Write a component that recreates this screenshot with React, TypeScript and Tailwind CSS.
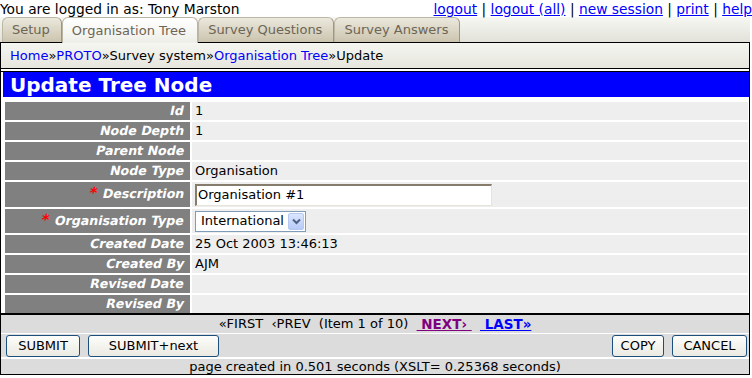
import React from "react";

type Row = {
  label: string;
  value?: string;
  required?: boolean;
  kind?: "input" | "select";
  h: string;
};

const rows: Row[] = [
  { label: "Id", value: "1", h: "h-[18px]" },
  { label: "Node Depth", value: "1", h: "h-[18px]" },
  { label: "Parent Node", value: "", h: "h-[18px]" },
  { label: "Node Type", value: "Organisation", h: "h-[18px]" },
  { label: "Description", required: true, kind: "input", h: "h-[25px]" },
  { label: "Organisation Type", required: true, kind: "select", h: "h-[24px]" },
  { label: "Created Date", value: "25 Oct 2003 13:46:13", h: "h-[18px]" },
  { label: "Created By", value: "AJM", h: "h-[18px]" },
  { label: "Revised Date", value: "", h: "h-[18px]" },
  { label: "Revised By", value: "", h: "h-[18px]" },
];

function Tab({ label, active }: { label: string; active?: boolean }) {
  if (active) {
    return (
      <div className="relative z-10 -mb-px h-[26px] flex items-center pl-[9px] pr-[11px] border-l border-r border-t border-[#b9b3a2] rounded-t-[6px] bg-gradient-to-b from-[#ffffff] to-[#eeeee8] text-[#6d6555]">
        {label}
      </div>
    );
  }
  return (
    <div className="h-[25px] flex items-center pl-[9px] pr-[11px] border-l border-t border-[#bcb6a4] border-r border-r-[#9d9682] rounded-t-[6px] bg-gradient-to-b from-[#ebe8dd] to-[#cbc4ae] text-[#6d6555]">
      {label}
    </div>
  );
}

function Button({ label, w }: { label: string; w: string }) {
  return (
    <div
      className={`${w} h-[22px] flex items-center justify-center border border-[#1d4f7c] rounded-[3px] bg-gradient-to-b from-[#fdfdfb] to-[#ebeae2] text-black`}
    >
      {label}
    </div>
  );
}

export default function App() {
  return (
    <div className="w-[752px] h-[378px] overflow-hidden bg-white text-black text-[13px] font-['DejaVu_Sans',sans-serif]">
      {/* top line */}
      <div className="h-[17px] flex justify-between items-center leading-[16px] text-[13.8px]">
        <span>You are logged in as: Tony Marston</span>
        <span>
          <span className="text-[#0000ff] underline">logout</span>
          {" | "}
          <span className="text-[#0000ff] underline">logout (all)</span>
          {" | "}
          <span className="text-[#0000ff] underline">new session</span>
          {" | "}
          <span className="text-[#0000ff] underline">print</span>
          {" | "}
          <span className="text-[#0000ff] underline">help</span>
        </span>
      </div>

      {/* tabs */}
      <div className="w-[750px] h-[25px] flex items-end pl-[2px] bg-gradient-to-b from-[#f7f7f3] to-[#e2e2da]">
        <Tab label="Setup" />
        <Tab label="Organisation Tree" active />
        <Tab label="Survey Questions" />
        <Tab label="Survey Answers" />
      </div>

      {/* main box */}
      <div className="w-[750px] border-l border-r border-black">
        {/* breadcrumb */}
        <div className="h-[27px] border-t border-b border-black flex items-center pl-[9px] bg-gradient-to-b from-[#f6f6f1] to-[#e6e6de]">
          <span className="text-[#0000ff]">Home</span>»
          <span className="text-[#0000ff]">PROTO</span>»Survey system»
          <span className="text-[#0000ff]">Organisation Tree</span>»Update
        </div>

        {/* form table */}
        <div className="mt-[2px] border-t border-b-2 border-black">
          <div className="ml-[2px] h-[25px] bg-[#0000ff] flex items-center pl-[7px] text-white font-bold text-[20px]">
            Update Tree Node
          </div>
          <div className="pt-[5px] pl-[4px] pr-[1px] flex flex-col gap-[2px]">
            {rows.map((r) => (
              <div key={r.label} className={`${r.h} flex gap-[2px]`}>
                <div className="w-[185px] shrink-0 bg-[#808080] flex items-center justify-end pr-[6px] text-white font-bold text-[12.6px]">
                  <span className="inline-block -skew-x-[12deg]">
                    {r.required && (
                      <span className="text-[#ff0000] text-[15px] leading-[10px] mr-[6px]">*</span>
                    )}
                    {r.label}
                  </span>
                </div>
                <div className="flex-1 bg-[#eeeeee] flex items-center pl-[3px]">
                  {r.kind === "input" ? (
                    <div className="w-[297px] h-[22px] bg-white flex items-center pl-[1px] border-t-2 border-l-2 border-r border-b border-t-[#857c6c] border-l-[#857c6c] border-r-[#e6e4d8] border-b-[#e6e4d8]">
                      Organisation #1
                    </div>
                  ) : r.kind === "select" ? (
                    <div className="w-[111px] h-[21px] bg-white border border-[#7f9db9] flex items-center justify-between pl-[5px] pr-[1px]">
                      <span>International</span>
                      <div className="w-[16px] h-[17px] rounded-[2px] border border-[#b5c8f3] bg-gradient-to-b from-[#dbe6fd] to-[#b7cbf7] flex items-center justify-center">
                        <svg width="9" height="7" viewBox="0 0 9 7">
                          <path d="M1 1.5 L4.5 5 L8 1.5" fill="none" stroke="#4d6185" strokeWidth="2" />
                        </svg>
                      </div>
                    </div>
                  ) : (
                    r.value
                  )}
                </div>
              </div>
            ))}
          </div>
        </div>

        {/* nav row */}
        <div className="h-[18px] bg-[#dcdcdc] flex items-center justify-center whitespace-pre">
          <span>{"«FIRST  ‹PREV  (Item 1 of 10)  "}</span>
          <span className="text-[#800080] font-bold underline text-[13.5px]">{" NEXT› "}</span>
          <span>{"  "}</span>
          <span className="text-[#0000ff] font-bold underline text-[13.5px]">{" LAST»"}</span>
        </div>

        {/* buttons row */}
        <div className="mt-[1px] h-[23px] bg-[#dcdcdc] flex items-start pt-[1px] pl-[5px] pr-[2px]">
          <div className="flex gap-[8px]">
            <Button label="SUBMIT" w="w-[74px]" />
            <Button label="SUBMIT+next" w="w-[131px]" />
          </div>
          <div className="flex-1" />
          <div className="flex gap-[8px]">
            <Button label="COPY" w="w-[52px]" />
            <Button label="CANCEL" w="w-[75px]" />
          </div>
        </div>

        {/* footer */}
        <div className="mt-[2px] h-[16px] bg-[#dcdcdc] border-b border-black flex items-center justify-center leading-[15px]">
          page created in 0.501 seconds (XSLT= 0.25368 seconds)
        </div>
      </div>
    </div>
  );
}
